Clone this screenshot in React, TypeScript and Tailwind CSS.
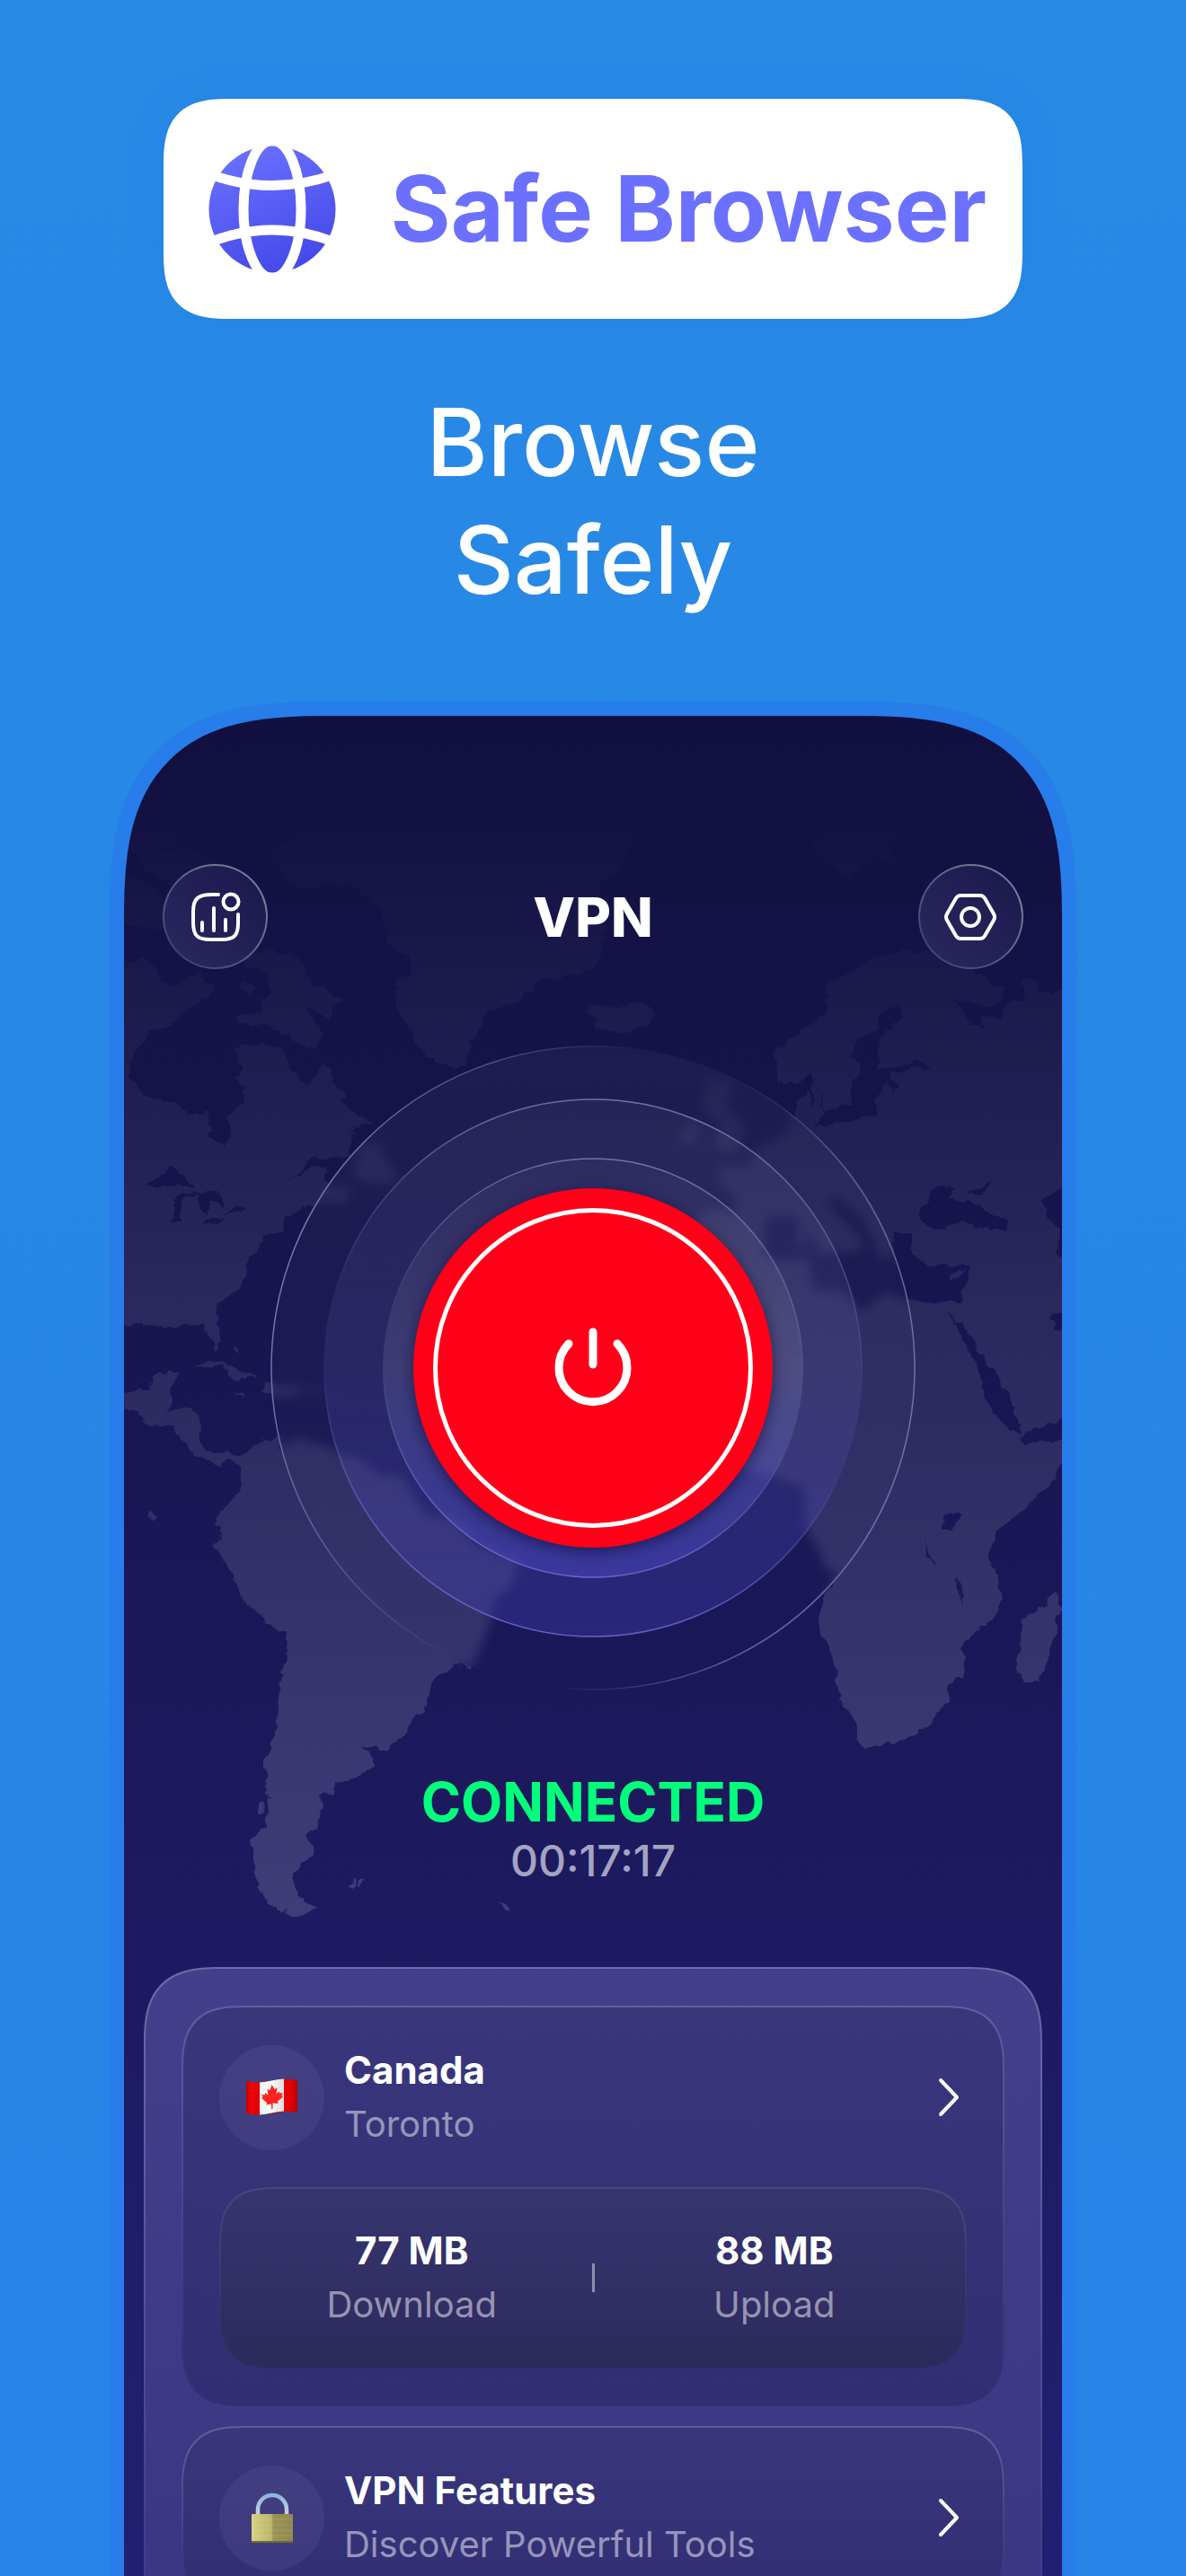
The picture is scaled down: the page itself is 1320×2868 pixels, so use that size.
function GlobeLogo() {
  return (
    <svg viewBox="-71 -71 142 142" className="size-[142px] shrink-0" aria-hidden="true">
      <defs>
        <linearGradient id="globe" x1="0.3" y1="0" x2="0.7" y2="1">
          <stop offset="0" stopColor="#6a70ff" />
          <stop offset="1" stopColor="#4347e8" />
        </linearGradient>
      </defs>
      <circle r="70.5" fill="url(#globe)" />
      <g fill="none" stroke="#fff" strokeWidth="11">
        <ellipse rx="32" ry="76.5" />
        <path d="M-75 -41 Q0 -12 75 -41" />
        <path d="M-75 39 Q0 7 75 39" />
      </g>
    </svg>
  )
}

function WorldMap() {
  return (
    <svg viewBox="138 797 1045 1400" className="absolute inset-x-0 top-0 w-full" aria-hidden="true">
      <defs>
        <linearGradient id="land" x1="0" y1="0" x2="0" y2="1">
          <stop offset="0.05" stopColor="#fff" stopOpacity="0" />
          <stop offset="0.45" stopColor="#fff" stopOpacity="0.08" />
          <stop offset="1" stopColor="#fff" stopOpacity="0.16" />
        </linearGradient>
        <filter id="coast" filterUnits="userSpaceOnUse" x="100" y="760" width="1120" height="1480">
          <feTurbulence type="fractalNoise" baseFrequency="0.07" numOctaves="3" seed="4" />
          <feDisplacementMap in="SourceGraphic" scale="12" xChannelSelector="R" yChannelSelector="G" />
        </filter>
        <mask id="continents" maskUnits="userSpaceOnUse" x="138" y="797" width="1045" height="1400">
          <g filter="url(#coast)" fill="#fff">
            {/* north america */}
            <g transform="translate(120 770) scale(.38265 .44643)">
              <path d="M470 410L520 370 620 320 700 290 1100 250 1500 260 1540 340 1510 400 1490 450 1430 470 1450 560 1440 640 1430 675 1370 705 1250 730 1180 780 1100 800 1080 850 1050 880 1040 930 1020 942 930 915 890 860 862 810 835 770 845 720 885 710 880 660 815 640 800 560 740 500 690 482 560 490 500 450Z" />
              <path d="M460 640L500 650 560 670 585 715 640 750 690 770 640 812 580 790 600 830 630 855 590 895 540 870 480 835 380 830 375 810 450 800 445 770 475 750 460 700 400 690 390 660Z" />
              <path d="M0 690L110 660 160 720 200 740 260 700 310 740 290 765 230 790 190 830 120 850 90 890 60 930 60 965 85 975 100 1010 180 1025 240 1050 290 1055 300 1110 340 1140 360 1110 345 1060 395 1030 395 985 365 965 385 940 370 890 400 880 460 880 520 900 540 950 575 980 600 965 628 925 660 970 690 1010 670 1020 720 1055 780 1085 715 1090 700 1160 590 1165 510 1230 560 1195 630 1185 635 1220 680 1260 590 1280 515 1310 510 1350 450 1360 440 1390 405 1410 410 1450 370 1495 315 1530 310 1580 0 1580Z" />
              <path d="M730 1130L780 1130 850 1220 780 1230 720 1210Z M640 1250L710 1230 700 1265 650 1280Z" />
              <path d="M0 330L150 300 240 330 210 380 100 400 0 390Z M90 400L230 390 330 430 300 470 220 500 110 450Z M0 440L100 470 180 530 250 560 170 600 50 580 0 600Z M300 290L470 300 420 360 330 370Z M200 600L300 590 290 660 220 650Z" />
              <path d="M385 735Q400 715 430 735 430 750 405 755 385 750Z M200 845L235 790 280 820 325 848Z M262 885L285 868 300 875 280 888Z M332 890l10-8 8 10-8 10Z" />
              <g fill="#000">
                <path d="M110 1230L150 1210 180 1190 220 1205 250 1240 200 1230 150 1235Z" />
                <path d="M190 1325L187 1280 215 1252 330 1250 335 1278 300 1275 290 1305 270 1290 260 1260 230 1262 212 1290 212 1325Z" />
                <path d="M272 1335L300 1318 350 1312 320 1335Z M340 1300L370 1290 405 1288 385 1300Z" />
              </g>
            </g>
            {/* central and south america */}
            <g transform="translate(120 1430) scale(.38265 .4847)">
              <path d="M0 -20L375 -20 310 40 325 100 330 135 315 148 290 115 280 75 200 62 150 75 90 70 0 80Z" />
              <path d="M0 240L120 250 145 205 208 203 190 240 172 292 240 288 275 300 265 362 295 392 350 385 400 405 385 430 350 398 330 420 280 405 225 375 195 330 120 325 80 295 0 280Z" />
              <path d="M250 192L300 177 360 190 440 220 390 222 330 192Z M440 250L465 225 500 235 560 235 560 255 480 256Z M362 250L400 254 395 262Z M365 145l10 0 8 20-10-5Z M580 240l30 2v12l-25-4Z" />
              <path d="M385 405L420 370 495 345 500 380 560 360 640 375 720 400 780 435 860 450 920 530 1000 540 1080 600 1200 640 1180 690 1120 730 1105 800 1060 878 1010 880 935 915 928 965 890 1005 860 1035 820 1070 740 1065 765 1080 775 1105 740 1135 668 1145 660 1175 615 1175 625 1200 610 1245 570 1270 600 1290 600 1310 540 1355 545 1385 560 1410 610 1440 555 1455 500 1440 450 1410 425 1360 420 1280 460 1250 470 1190 455 1110 490 1030 495 960 512 880 518 805 490 790 405 740 380 700 340 640 310 600 335 575 315 550 340 510 385 480 382 430Z" />
              <path d="M118 530l10-6 8 12-6 10-10-6Z M695 1383l20-14 10 4-16 14Z M722 1383l20-12 12 6-22 10Z M1130 1426l28 4 12 12-20-3Z M438 1215l8-25 12 2-4 25Z" />
            </g>
            {/* europe and western asia */}
            <g transform="translate(640 770) scale(.38265 .44643)">
              <path d="M35 800L60 778 100 790 190 775 235 805 200 835 140 857 90 845 60 840 70 815Z" />
              <path d="M690 360L830 340 990 345 960 360 900 380 940 430 860 410 795 470 760 440 710 410Z" />
              <path d="M395 960L470 975 440 1020 500 1110 440 1160 400 1130 420 1080 370 1040Z M310 1090L370 1070 350 1130 300 1130Z" />
              <path d="M585 890L640 860 730 800 735 740 850 670 960 645 1040 650 1150 695 1250 740 1250 770 1190 785 1100 765 1140 800 1150 830 1190 838 1180 815 1240 820 1260 775 1310 770 1300 720 1350 720 1345 755 1460 740 1460 1600 400 1600 360 1500 350 1310 470 1290 460 1250 410 1210 420 1180 500 1190 530 1140 600 1110 645 1065 640 1030 680 995 700 1050 690 950 650 980 590 970Z" />
              <g fill="#000">
                <path d="M700 960L725 1050 705 1080 760 1078 875 1060 880 1020 910 970 930 1005 940 985 915 945 1040 937 1020 925 960 930 890 940 885 890 905 850 955 810 945 792 895 800 880 840 820 870 812 910 840 940 810 980 800 1030 730 1050Z" />
                <path d="M1000 1315L1040 1240 1110 1235 1085 1270 1140 1270 1260 1320 1255 1343 1190 1343 1130 1320 1050 1342Z M1135 1250L1215 1225 1180 1258Z" />
                <path d="M1460 1210L1365 1270 1375 1310 1410 1350 1400 1400 1460 1430Z" />
                <path d="M540 1410L560 1310 640 1310 720 1400 800 1400 850 1385 730 1270 770 1260 860 1340 880 1400 925 1420 930 1350 985 1355 985 1410 1030 1435 1155 1430 1120 1525 1030 1530 970 1520 900 1500 840 1550 790 1500 690 1490 690 1420Z" />
              </g>
              <path d="M1085 1458l60-20-25 20-30 8Z M650 1340l25 5-5 40-25-5Z" />
            </g>
            {/* africa */}
            <g transform="translate(640 1430) scale(.38265 .4847)">
              <path d="M300 40L700 15 850 60 970 38 1050 45 1120 45 1150 10 1460 10 1460 300 1418 310 1330 340 1285 350 1315 370 1460 350 1400 440 1370 475 1300 520 1235 565 1205 615 1215 650 1235 680 1240 750 1220 775 1180 790 1128 830 1140 860 1135 900 1090 920 1085 960 1030 1010 970 1050 910 1055 850 1070 818 1045 820 1020 770 945 755 865 712 800 710 760 745 700 760 665 730 640 700 590 665 550 680 500 660 460 600 450 520 430 300 420Z" />
              <path d="M1395 705L1425 740 1405 780 1375 870 1350 912 1310 915 1285 870 1303 830 1300 770 1365 745 1370 730Z" />
              <g fill="#000">
                <path d="M1085 62L1115 95 1130 88 1175 150 1215 200 1260 250 1280 290 1298 345 1220 300 1185 240 1170 185Z" />
                <path d="M1385 70L1460 60 1460 130 1400 105Z M1070 560L1075 530 1125 528 1105 562Z M1022 580L1030 610 1055 652 1030 630Z M1112 672L1125 690 1133 740 1118 720Z" />
              </g>
            </g>
          </g>
        </mask>
      </defs>
      <rect x="138" y="797" width="1045" height="1400" fill="url(#land)" mask="url(#continents)" />
    </svg>
  )
}

function StatsIcon() {
  return (
    <svg viewBox="0 0 56 56" className="size-14" fill="none" stroke="#fff" strokeWidth="4" strokeLinecap="round" aria-hidden="true">
      <path d="M31 3H24C9 3 3 7 3 22V34C3 49 8 53 22 53H35C49 53 53 48 53 35V25" />
      <circle cx="45" cy="11" r="8.5" />
      <path d="M13 34V43M26 18V43M39 31V43" />
    </svg>
  )
}

function HexIcon() {
  return (
    <svg viewBox="0 0 58 54" className="h-[54px] w-[58px]" fill="none" stroke="#fff" strokeWidth="4" strokeLinejoin="round" aria-hidden="true">
      <path d="M18 3H40Q43 3 45 6L55 23.500Q57 27 55 30.500L45 48Q43 51 40 51H18Q15 51 13 48L3 30.500Q1 27 3 23.500L13 6Q15 3 18 3Z" />
      <circle cx="29" cy="27" r="10" />
    </svg>
  )
}

function RoundButton({ label, children }) {
  return (
    <button aria-label={label} className="size-[117px] rounded-full bg-linear-to-bl from-white/50 to-white/15 p-[2px]">
      <span className="flex size-full items-center justify-center rounded-full bg-linear-to-bl from-[#1b184b] to-[#2a2860]">
        {children}
      </span>
    </button>
  )
}

function RingLines() {
  return (
    <svg viewBox="-359 -359 718 718" className="pointer-events-none absolute inset-0 size-full" fill="none" strokeWidth="1.500" aria-hidden="true">
      <defs>
        <linearGradient id="ringSide" x1="0" y1="0.35" x2="1" y2="0.65">
          <stop offset="0" stopColor="#8683bd" stopOpacity="0.9" />
          <stop offset="0.2" stopColor="#8683bd" stopOpacity="0.5" />
          <stop offset="0.42" stopColor="#8683bd" stopOpacity="0" />
          <stop offset="0.58" stopColor="#8683bd" stopOpacity="0" />
          <stop offset="0.8" stopColor="#8683bd" stopOpacity="0.6" />
          <stop offset="1" stopColor="#8683bd" stopOpacity="0.8" />
        </linearGradient>
        <linearGradient id="ringEnds" x1="0.6" y1="0" x2="0.4" y2="1">
          <stop offset="0" stopColor="#8683c4" stopOpacity="0.8" />
          <stop offset="0.45" stopColor="#8683c4" stopOpacity="0" />
          <stop offset="0.6" stopColor="#8683c4" stopOpacity="0" />
          <stop offset="1" stopColor="#6d69cc" stopOpacity="0.9" />
        </linearGradient>
      </defs>
      <circle r="358" stroke="url(#ringSide)" />
      <circle r="299" stroke="url(#ringEnds)" />
      <circle r="233" stroke="url(#ringEnds)" />
    </svg>
  )
}

function PowerIcon() {
  return (
    <svg viewBox="-45 -45 90 90" className="size-[90px]" fill="none" stroke="#fff" strokeWidth="9" strokeLinecap="round" aria-hidden="true">
      <path d="M-27 -27A38 38 0 1 0 27 -27" />
      <path d="M0 -40V-4" />
    </svg>
  )
}

function PowerDial() {
  return (
    <div className="relative mx-auto mt-[85px] flex size-[718px] items-center justify-center rounded-full bg-linear-to-b from-white/4 to-white/0 backdrop-blur-[6px]">
      <div className="flex size-[600px] items-center justify-center rounded-full bg-linear-to-b from-white/4 via-[#8a86e0]/12 to-[#3f3bb0]/40">
        <div className="flex size-[468px] items-center justify-center rounded-full bg-linear-to-b from-white/3 via-white/10 to-[#5450d8]/40">
          <button aria-label="Disconnect" className="size-[400px] rounded-full bg-[#ff0018] p-[22px] shadow-[0_4px_16px_rgba(10,8,50,0.6)]">
            <span className="flex size-full items-center justify-center rounded-full border-[5px] border-white">
              <PowerIcon />
            </span>
          </button>
        </div>
      </div>
      <RingLines />
    </div>
  )
}

function CanadaFlag() {
  return (
    <svg viewBox="0 0 60 44" className="h-11 w-[60px]" aria-hidden="true">
      <defs>
        <linearGradient id="flagRed">
          <stop offset="0" stopColor="#c40000" />
          <stop offset="0.1" stopColor="#f00505" />
          <stop offset="0.3" stopColor="#d90000" />
          <stop offset="0.85" stopColor="#e60000" />
          <stop offset="1" stopColor="#b80000" />
        </linearGradient>
        <linearGradient id="flagWhite">
          <stop offset="0" stopColor="#eee" />
          <stop offset="0.4" stopColor="#fff" />
          <stop offset="1" stopColor="#ddd" />
        </linearGradient>
      </defs>
      <path d="M1 4C20 9 36 -1 58 3V39C38 35 22 45 1 40Z" fill="url(#flagRed)" />
      <path d="M16 5.500C25 5 33 2 43 1.500V37.500C33 38 25 41 16 41.500Z" fill="url(#flagWhite)" />
      <path
        d="M29.500 8l3 5 3-1.500-1 7 3-3 1 2 3-.5-1 3.500 1.500 1-6 5 .5 2.500-6-.5V35h-1.500v-5.500l-5.500 1 .5-2.500-6-5 1.500-1-1-3 3 .5 1-2.500 3 3-1-7 3 1Z"
        fill="#ff2222"
      />
    </svg>
  )
}

function Padlock() {
  return (
    <svg viewBox="0 0 48 58" className="h-[58px] w-12" aria-hidden="true">
      <defs>
        <linearGradient id="brass">
          <stop offset="0" stopColor="#d8d283" />
          <stop offset="0.48" stopColor="#bdb56b" />
          <stop offset="0.52" stopColor="#9c9455" />
          <stop offset="1" stopColor="#8f8850" />
        </linearGradient>
        <linearGradient id="steel" x1="0" y1="0" x2="0" y2="1">
          <stop offset="0" stopColor="#8fb4d6" />
          <stop offset="1" stopColor="#c9d6e2" />
        </linearGradient>
      </defs>
      <path d="M8 27V20A16 16 0 0 1 40 20V27" fill="none" stroke="url(#steel)" strokeWidth="4.500" />
      <rect x="1" y="25" width="46" height="32" rx="1" fill="url(#brass)" />
      <path d="M1 31H47M1 37H47M1 43H47M1 49H47" stroke="#fff" strokeOpacity="0.12" />
      <path d="M1 56H47" stroke="#6f6939" strokeWidth="2" />
    </svg>
  )
}

function Chevron() {
  return (
    <svg viewBox="0 0 24 44" className="mr-2 h-11 w-6" fill="none" stroke="#fff" strokeWidth="4" strokeLinecap="round" strokeLinejoin="round" aria-hidden="true">
      <path d="M3 3L21 22L3 41" />
    </svg>
  )
}

function CardRow({ icon, title, subtitle }) {
  return (
    <button className="flex w-full items-center gap-[22px] text-left">
      <span className="flex size-[117px] shrink-0 items-center justify-center rounded-full bg-white/5">{icon}</span>
      <span className="flex-1">
        <span className="block text-[42px] leading-[60px] font-bold text-white">{title}</span>
        <span className="block text-[40px] leading-[60px] text-[#9895ba]">{subtitle}</span>
      </span>
      <Chevron />
    </button>
  )
}

function Card({ children }) {
  return (
    <div className="rounded-[72px] bg-linear-to-b from-[#625e9b] to-[#322e74] p-[2px] [corner-shape:superellipse(1.5)]">
      <div className="rounded-[70px] bg-linear-to-b from-[#39367c] to-[#322e74] p-[40px] [corner-shape:superellipse(1.5)]">{children}</div>
    </div>
  )
}

function Stat({ value, label }) {
  return (
    <div className="flex-1 text-center">
      <p className="text-[42px] leading-[60px] font-bold text-white">{value}</p>
      <p className="text-[40px] leading-[60px] text-[#9694b1]">{label}</p>
    </div>
  )
}

export default function App() {
  return (
    <main className="flex h-screen flex-col overflow-hidden bg-linear-to-b from-[#278ae5] to-[#2783e6] px-[122px] pt-[110px] font-['Inter',sans-serif]">
      <div className="mx-[60px] flex shrink-0 items-center justify-between rounded-[76px] bg-white py-[51px] pr-[40px] pl-[50px] shadow-[0_0_40px_rgba(30,110,220,0.15)] [corner-shape:superellipse(1.5)]">
        <GlobeLogo />
        <span className="text-[102px] leading-[143px] font-bold whitespace-nowrap text-[#6b70ff]">Safe Browser</span>
      </div>

      <h1 className="mt-[72px] text-center text-[104px] leading-[131px] font-medium text-white">
        Browse
        <br />
        Safely
      </h1>

      <div className="mt-[92px] rounded-t-[246px] bg-[#277de9] px-4 pt-4 [corner-shape:superellipse(1.5)]">
        <div className="relative overflow-hidden rounded-t-[230px] bg-linear-to-b from-[#121040] via-[#1b185a] to-[#232075] [corner-shape:superellipse(1.5)]">
          <WorldMap />
          <div className="relative">
            <header className="flex items-center justify-between px-[43px] pt-[165px]">
              <RoundButton label="Statistics">
                <StatsIcon />
              </RoundButton>
              <h2 className="text-[61px] leading-[76px] font-extrabold text-white">VPN</h2>
              <RoundButton label="Settings">
                <HexIcon />
              </RoundButton>
            </header>

            <PowerDial />

            <p className="mt-[88px] text-center text-[60px] leading-[72px] font-bold text-[#00ff7b]">CONNECTED</p>
            <p className="text-center text-[48px] leading-[60px] font-medium text-[#a5a3c2]">00:17:17</p>

            <section className="mx-[22px] mt-[88px] rounded-t-[88px] bg-linear-to-b from-[#6f6ba9] to-[#3b3782] px-[2px] pt-[2px] [corner-shape:superellipse(1.5)]">
              <div className="flex flex-col gap-[22px] rounded-t-[86px] bg-linear-to-b from-[#433f8b] to-[#3a3681] px-[40px] py-[41px] [corner-shape:superellipse(1.5)]">
                <Card>
                  <CardRow icon={<CanadaFlag />} title="Canada" subtitle="Toronto" />
                  <div className="mt-[40px] rounded-[66px] bg-linear-to-b from-[#4a477d] to-[#2d2b5e] p-[2px] [corner-shape:superellipse(1.5)]">
                    <div className="flex items-center rounded-[64px] bg-linear-to-b from-[#373570] to-[#2c2a5c] px-3 py-[39px] [corner-shape:superellipse(1.5)]">
                      <Stat value="77 MB" label="Download" />
                      <span className="h-[32px] w-[3px] bg-[#8f8dad]" />
                      <Stat value="88 MB" label="Upload" />
                    </div>
                  </div>
                </Card>
                <Card>
                  <CardRow icon={<Padlock />} title="VPN Features" subtitle="Discover Powerful Tools" />
                </Card>
              </div>
            </section>
          </div>
        </div>
      </div>
    </main>
  )
}
